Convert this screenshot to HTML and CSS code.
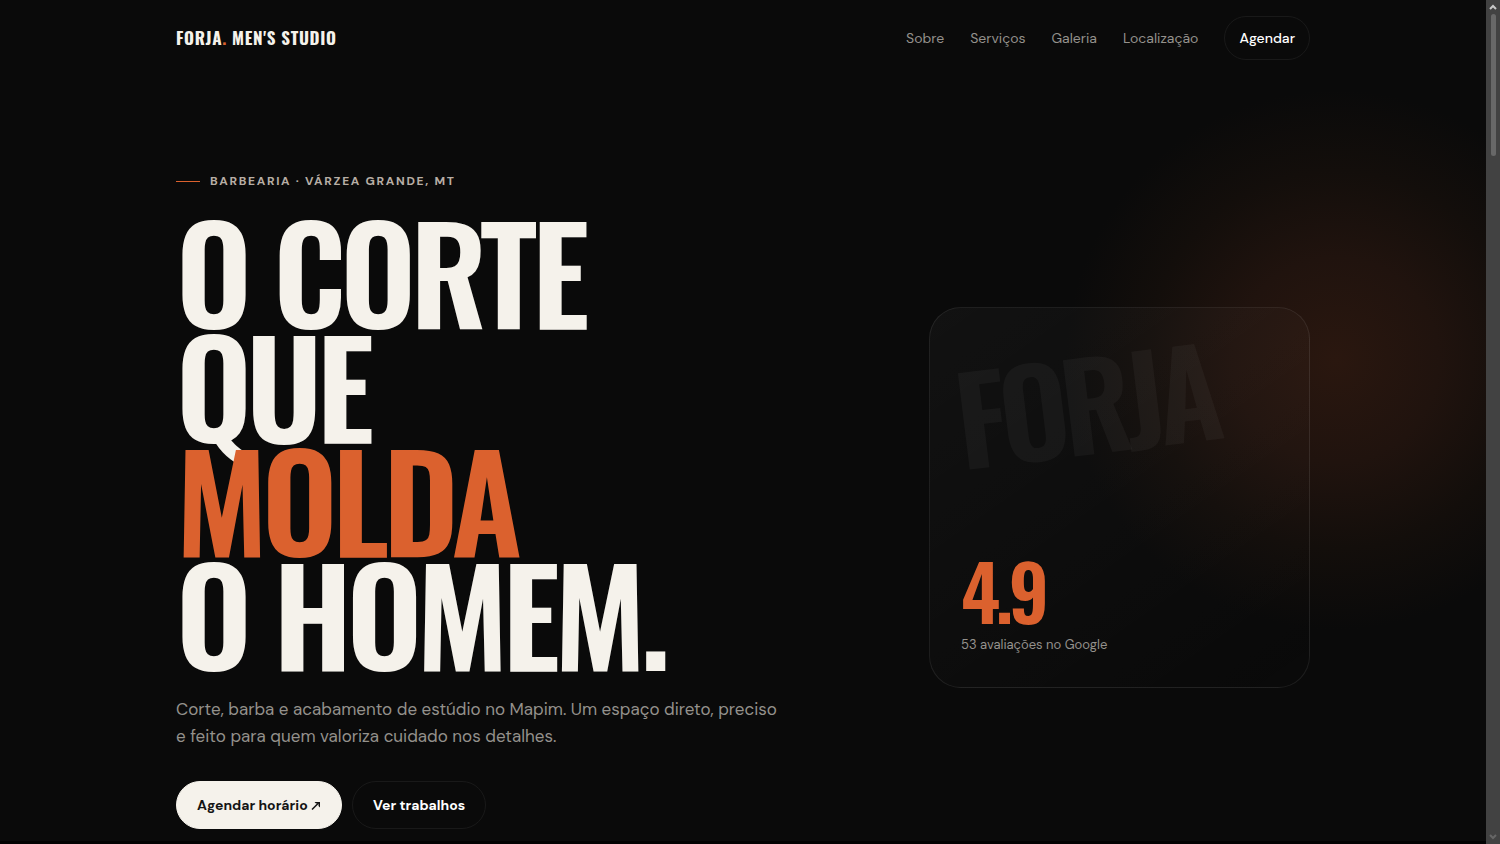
FILE: index.html
```html
<!DOCTYPE html>
<html lang="pt-BR">
<head>
  <meta charset="UTF-8" />
  <meta name="viewport" content="width=device-width, initial-scale=1.0" />
  <title>Forja. Men's Studio</title>
  <link rel="stylesheet" href="styles.css">
</head>
<body>

  <div class="page">
    <div class="glow"></div>

    <header class="container header">
      <a class="logo" href="#">FORJA<span>.</span> MEN'S STUDIO</a>
      <nav class="nav">
        <a href="#sobre">Sobre</a>
        <a href="#servicos">Serviços</a>
        <a href="#galeria">Galeria</a>
        <a href="#localizacao">Localização</a>
        <a class="nav-cta" href="#agendar">Agendar</a>
      </nav>
    </header>

    <main class="container hero">
      <div class="hero-text">
        <p class="eyebrow">Barbearia · Várzea Grande, MT</p>
        <h1>O corte<br>que<br><span>molda</span><br>o homem.</h1>
        <p class="lead">Corte, barba e acabamento de estúdio no Mapim. Um espaço direto, preciso e feito para quem valoriza cuidado nos detalhes.</p>
        <div class="actions">
          <a class="btn btn-light" href="#agendar">Agendar horário
            <svg width="10" height="9" viewBox="0 0 10 9" aria-hidden="true">
              <path d="M1 8.5 7.5 2" fill="none" stroke="currentColor" stroke-width="1.5" />
              <path d="M3.5 1H9v5.5L7.5 5V2.5H5z" fill="currentColor" />
            </svg>
          </a>
          <a class="btn btn-ghost" href="#galeria">Ver trabalhos</a>
        </div>
      </div>

      <aside class="card">
        <div class="card-mark">FORJA</div>
        <div>
          <strong class="score">4.9</strong>
          <p class="score-label">53 avaliações no Google</p>
        </div>
      </aside>
    </main>
  </div>

  <div class="scrollbar">
    <svg width="8" height="6" viewBox="0 0 8 6" aria-hidden="true"><path d="M1 5 4 2l3 3" /></svg>
    <div class="thumb"></div>
    <svg class="down" width="8" height="6" viewBox="0 0 8 6" aria-hidden="true"><path d="M1 1l3 3 3-3" /></svg>
  </div>

</body>
</html>
```
FILE: styles.css
```css
:root {
  --bg: #0a0a0a;
  --light: #f5f2eb;
  --orange: #db612e;
  --muted: #94918c;
  --line: #191919;
  --display: Oswald, "Liberation Sans Narrow", "Liberation Sans", sans-serif;
  --text: "DM Sans", Inter, "Liberation Sans", sans-serif;
}

* {
  box-sizing: border-box;
}

body {
  margin: 0;
  display: flex;
  height: 100vh;
  overflow: hidden;
  background: var(--bg);
  color: var(--light);
  font-family: var(--text);
}

a {
  color: inherit;
  text-decoration: none;
}

p,
h1 {
  margin: 0;
}

.page {
  position: relative;
  flex: 1;
  overflow: hidden;
  border-bottom: 3px solid #020202;
}

.glow {
  position: absolute;
  top: 90px;
  right: -120px;
  width: 540px;
  height: 540px;
  background: radial-gradient(circle closest-side, #2a170f, #20130e 38%, #130e0b 70%, transparent);
}

.container {
  position: relative;
  max-width: 1182px;
  margin: 0 auto;
  padding: 0 24px;
}

/* Header */
.header {
  display: flex;
  align-items: center;
  justify-content: space-between;
  height: 76px;
}

.logo {
  font-family: var(--display);
  font-size: 17px;
  font-weight: 700;
  line-height: 24px;
  letter-spacing: 0.04em;
}

.logo span {
  color: var(--orange);
}

.nav {
  display: flex;
  align-items: center;
  gap: 26px;
  font-size: 14px;
  color: var(--muted);
}

.nav-cta {
  padding: 0 14px;
  border: 1px solid var(--line);
  border-radius: 22px;
  line-height: 42px;
  font-weight: 500;
  color: #fff;
}

/* Hero */
.hero {
  display: grid;
  grid-template-columns: 1fr 381px;
  gap: 120px;
  align-items: center;
  padding-top: 95px;
}

.hero-text {
  max-width: 610px;
}

.eyebrow {
  display: flex;
  align-items: center;
  gap: 10px;
  margin-bottom: 22px;
  font-size: 12px;
  font-weight: 700;
  line-height: 20px;
  letter-spacing: 0.14em;
  text-transform: uppercase;
  color: #b8aea5;
}

.eyebrow::before {
  content: "";
  width: 24px;
  height: 1px;
  background: var(--orange);
}

h1 {
  font-family: var(--display);
  font-size: 132px;
  font-weight: 600;
  line-height: 114px;
  letter-spacing: -0.045em;
  text-transform: uppercase;
}

h1 span {
  color: var(--orange);
}

.lead {
  margin-top: 27px;
  font-size: 17px;
  line-height: 27px;
  color: var(--muted);
}

.actions {
  display: flex;
  gap: 10px;
  margin-top: 31px;
}

.btn {
  padding: 0 20px;
  border: 1px solid var(--line);
  border-radius: 24px;
  font-size: 14px;
  font-weight: 700;
  line-height: 46px;
}

.btn-light {
  border-color: var(--light);
  background: var(--light);
  color: #141414;
}

.btn-ghost {
  color: #fff;
}

/* Rating card */
.card {
  display: flex;
  flex-direction: column;
  justify-content: space-between;
  aspect-ratio: 1;
  margin-bottom: 5px;
  padding: 31px;
  border: 1px solid rgba(255, 255, 255, 0.08);
  border-radius: 32px;
  background: linear-gradient(145deg, rgba(255, 255, 255, 0.035), rgba(255, 255, 255, 0.01) 65%, transparent);
}

.card-mark {
  align-self: flex-start;
  margin-left: -6px;
  font-family: var(--display);
  font-size: 120px;
  font-weight: 600;
  line-height: 124px;
  letter-spacing: -0.06em;
  color: rgba(255, 255, 255, 0.04);
  transform: rotate(-7deg);
}

.score {
  display: block;
  font-family: var(--display);
  font-size: 76px;
  font-weight: 600;
  line-height: 76px;
  letter-spacing: -0.06em;
  color: var(--orange);
}

.score-label {
  margin-top: 6px;
  font-size: 13px;
  line-height: 22px;
  color: var(--muted);
}

/* Scrollbar */
.scrollbar {
  display: flex;
  flex-direction: column;
  align-items: center;
  width: 14px;
  padding: 4px 0;
  background: #424242;
}

.scrollbar path {
  fill: none;
  stroke: #c8c8c8;
  stroke-width: 2;
}

.thumb {
  width: 5px;
  height: 17%;
  margin-top: 4px;
  border-radius: 3px;
  background: #686868;
}

.scrollbar .down {
  margin-top: auto;
}

.scrollbar .down path {
  stroke: #666;
}
```
